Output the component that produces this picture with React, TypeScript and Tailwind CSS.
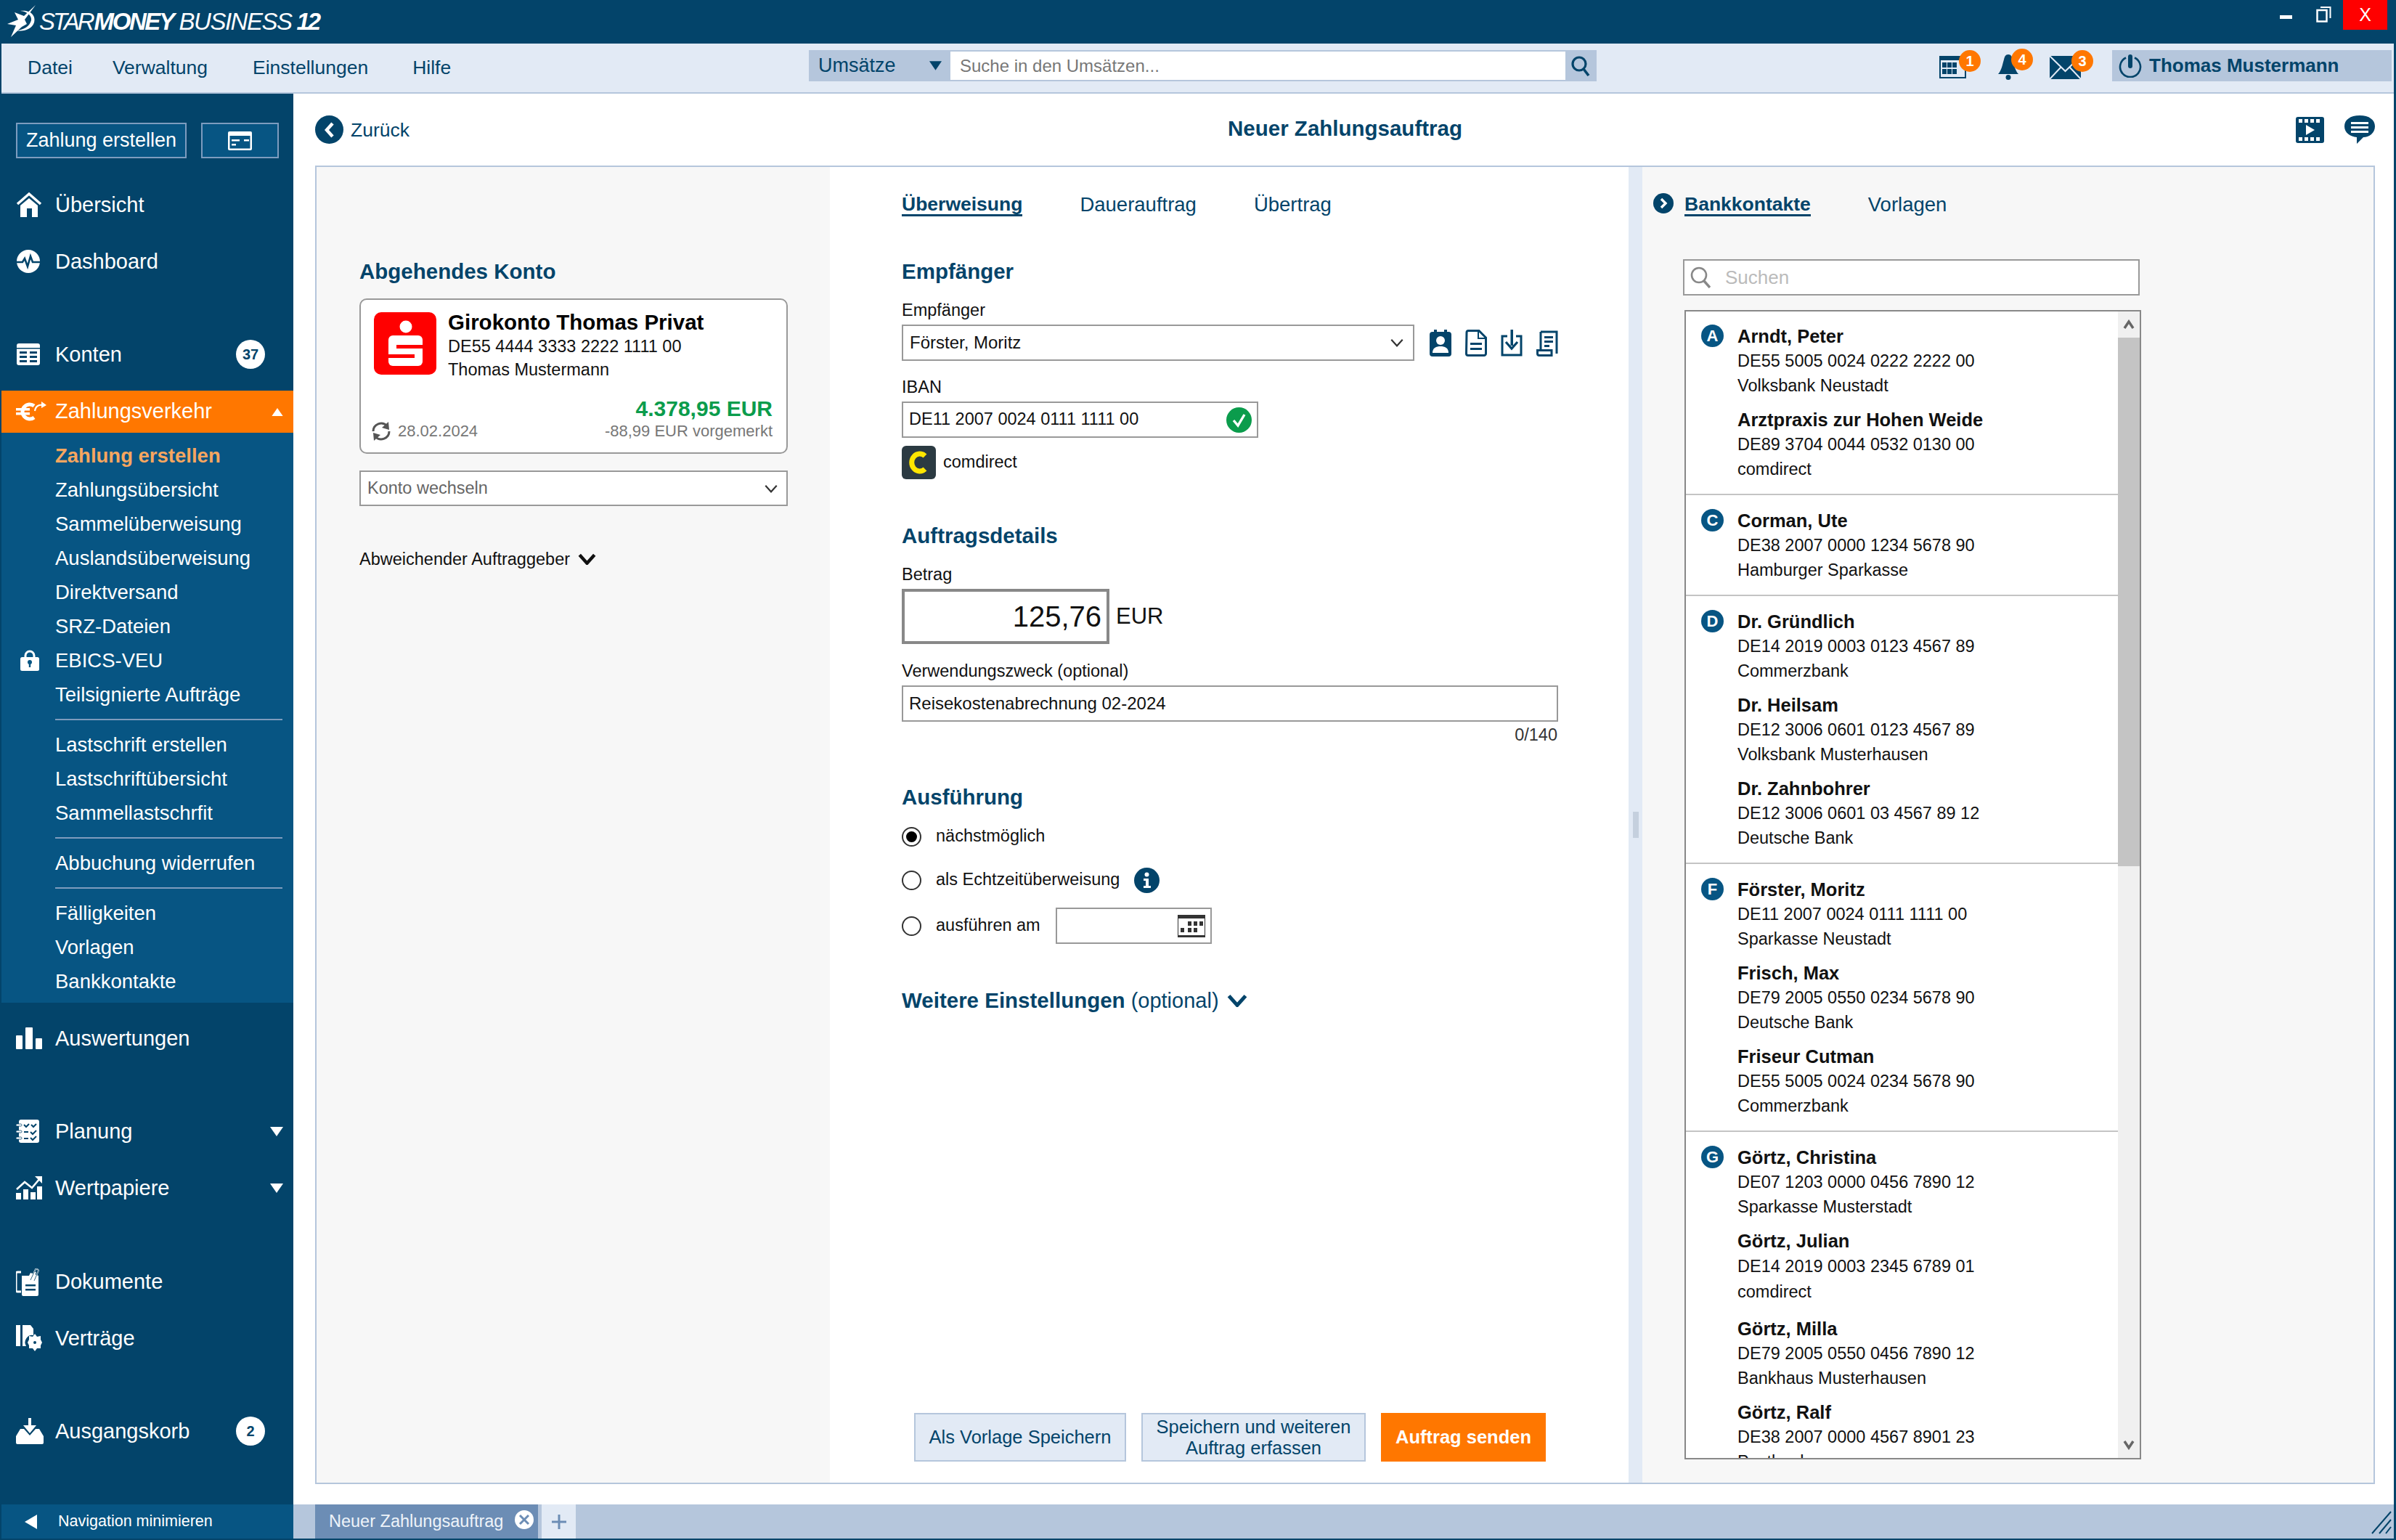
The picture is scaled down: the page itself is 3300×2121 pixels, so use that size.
import React from "react";

const NAVY = "#03446a";

const Svg = ({ w, h, vb, children, className }: { w: number; h: number; vb: string; children: React.ReactNode; className?: string }) => (
  <svg width={w} height={h} viewBox={vb} className={className} style={{ flexShrink: 0, display: "block" }}>
    {children}
  </svg>
);

const Chevron = ({ w = 22, h = 14, color = "#333", sw = 2.5 }: { w?: number; h?: number; color?: string; sw?: number }) => (
  <Svg w={w} h={h} vb="0 0 22 14">
    <polyline points="2,2 11,12 20,2" fill="none" stroke={color} strokeWidth={sw} />
  </Svg>
);

const Tri = ({ up = false, color = "#fff", w = 18, h = 13 }: { up?: boolean; color?: string; w?: number; h?: number }) => (
  <Svg w={w} h={h} vb="0 0 18 13">
    <polygon points={up ? "0,13 18,13 9,0" : "0,0 18,0 9,13"} fill={color} />
  </Svg>
);

const Logo = () => (
  <Svg w={44} h={48} vb="8 5 44 48">
    <path d="M49 7 L33 22 L20 17 L25 27 L10 33 L22 35 L15 51 L30 37 L37 33 L34 27Z" fill="#fff" />
    <path d="M28 15 C40 13 50 20 47 31 C44 40 33 44 23 42 C33 41 41 36 43 28 C44 22 38 16 28 15Z" fill="#fff" />
  </Svg>
);

const IHome = () => (
  <Svg w={36} h={36} vb="0 0 36 36">
    <polyline points="2,17 18,3 34,17" fill="none" stroke="#fff" strokeWidth="3.5" />
    <path d="M6 19 L18 9 L30 19 V35 H6Z" fill="#fff" />
    <rect x="15" y="23" width="7" height="12" fill={NAVY} />
  </Svg>
);
const IDash = () => (
  <Svg w={34} h={34} vb="0 0 34 34">
    <circle cx="17" cy="17" r="16" fill="#fff" />
    <polyline points="0,18 9,18 12,13 16,24 20,10 23,18 34,18" fill="none" stroke={NAVY} strokeWidth="2.6" />
  </Svg>
);
const IKonten = () => (
  <Svg w={34} h={30} vb="0 0 34 30">
    <rect x="1" y="0" width="32" height="30" rx="3" fill="#fff" />
    <rect x="1" y="6" width="32" height="1.5" fill={NAVY} />
    <rect x="5" y="11" width="10" height="3" fill={NAVY} /><rect x="19" y="11" width="10" height="3" fill={NAVY} />
    <rect x="5" y="17" width="10" height="3" fill={NAVY} /><rect x="19" y="17" width="10" height="3" fill={NAVY} />
    <rect x="5" y="23" width="10" height="3" fill={NAVY} /><rect x="19" y="23" width="10" height="3" fill={NAVY} />
  </Svg>
);
const IEuro = () => (
  <Svg w={42} h={30} vb="0 0 42 30">
    <path d="M25 7 A10 10 0 1 0 25 23" fill="none" stroke="#fff" strokeWidth="5" />
    <rect x="0" y="10" width="19" height="3.5" fill="#fff" />
    <rect x="0" y="16" width="19" height="3.5" fill="#fff" />
    <path d="M26 14 C27 7 32 5 37 6" fill="none" stroke="#fff" strokeWidth="2.2" />
    <polygon points="35,1 42,6 35,10" fill="#fff" />
  </Svg>
);
const ILock = () => (
  <Svg w={28} h={30} vb="0 0 28 30">
    <path d="M8 11 V8 A6 6 0 0 1 20 8 V11" fill="none" stroke="#fff" strokeWidth="3" />
    <rect x="1" y="10" width="26" height="19" rx="2.5" fill="#fff" />
    <circle cx="14" cy="17" r="3" fill="#075583" />
    <rect x="12.8" y="17" width="2.4" height="7" fill="#075583" />
  </Svg>
);
const IBars = () => (
  <Svg w={36} h={30} vb="0 0 36 30">
    <rect x="0" y="11" width="9" height="19" rx="1" fill="#fff" />
    <rect x="13" y="0" width="10" height="30" rx="1" fill="#fff" />
    <rect x="27" y="15" width="9" height="15" rx="1" fill="#fff" />
  </Svg>
);
const IPlan = () => (
  <Svg w={32} h={32} vb="0 0 32 32">
    <rect x="4" y="0" width="28" height="32" rx="3" fill="#fff" />
    {[6, 15, 24].map((y) => <rect key={y} x="0" y={y} width="8" height="3" rx="1.5" fill="#fff" stroke={NAVY} strokeWidth="0.8" />)}
    <polyline points="11,7 14,10 18,6" fill="none" stroke={NAVY} strokeWidth="2" />
    <polyline points="21,7 24,10 28,6" fill="none" stroke={NAVY} strokeWidth="2" />
    <polyline points="20,17 23,20 28,15" fill="none" stroke={NAVY} strokeWidth="2" />
    <polyline points="20,25 23,28 28,23" fill="none" stroke={NAVY} strokeWidth="2" />
    <rect x="11" y="16" width="6" height="2" fill={NAVY} />
    <rect x="11" y="25" width="6" height="2" fill={NAVY} />
  </Svg>
);
const IStock = () => (
  <Svg w={36} h={32} vb="0 0 36 32">
    <rect x="0" y="23" width="7" height="9" fill="#fff" />
    <rect x="10" y="18" width="7" height="14" fill="#fff" />
    <rect x="20" y="22" width="7" height="10" fill="#fff" />
    <rect x="29" y="14" width="7" height="18" fill="#fff" />
    <polyline points="1,18 12,8 22,16 33,3" fill="none" stroke="#fff" strokeWidth="2.6" />
    <polygon points="26,0 36,0 36,10" fill="#fff" />
  </Svg>
);
const IDocs = () => (
  <Svg w={32} h={40} vb="0 0 32 40">
    <path d="M7 7 H2 A2 2 0 0 0 0 9 V32 A2 2 0 0 0 2 34 H7" fill="none" stroke="#fff" strokeWidth="3" />
    <path d="M8 12 H18 L20 8 L31 12 V38 A2 2 0 0 1 29 40 H10 A2 2 0 0 1 8 38Z" fill="#fff" />
    <path d="M20 18 L27 3 A3 3 0 0 1 31 5 L25 19 A1.5 1.5 0 0 1 22 18 L27 7" fill="none" stroke="#fff" strokeWidth="1.8" />
    <path d="M20 18 L27 3 A3 3 0 0 1 31 5 L25 19" fill="none" stroke={NAVY} strokeWidth="0.8" />
    <rect x="13" y="24" width="14" height="2.5" fill={NAVY} />
    <rect x="13" y="30" width="14" height="2.5" fill={NAVY} />
  </Svg>
);
const IContract = () => (
  <Svg w={36} h={36} vb="0 0 36 36">
    <rect x="0" y="0" width="6" height="29" fill="#fff" />
    <path d="M9 0 H20 L24 5 V14 A10 10 0 0 0 14 29 H9Z" fill="#fff" />
    <circle cx="26" cy="24" r="8" fill="#fff" />
    <path d="M26 12 L29 16 L34 15 L34 20 L36 24 L34 28 L34 32 L29 32 L26 36 L23 32 L18 32 L18 28 L16 24 L18 20 L18 15 L23 16Z" fill="#fff" />
    <circle cx="26" cy="24" r="2" fill={NAVY} />
  </Svg>
);
const IOut = () => (
  <Svg w={38} h={36} vb="0 0 38 36">
    <rect x="17" y="0" width="4" height="12" fill="#fff" />
    <polygon points="10,10 28,10 19,21" fill="#fff" />
    <path d="M0 25 L6 15 H11 L19 24 L27 15 H32 L38 25 V34 A2 2 0 0 1 36 36 H2 A2 2 0 0 1 0 34Z" fill="#fff" />
  </Svg>
);

const NavItem = ({ icon, label, right }: { icon: React.ReactNode; label: string; right?: React.ReactNode }) => (
  <div className="h-[78px] flex items-center text-white text-[29px] leading-[34px]">
    <div className="w-[76px] shrink-0 pl-[22px] flex items-center">{icon}</div>
    <span className="flex-1">{label}</span>
    {right}
  </div>
);

const Count = ({ n }: { n: string }) => (
  <div className="w-[40px] h-[40px] rounded-full bg-white mr-[39px] flex items-center justify-center text-[20px] font-bold text-[#03446a]">{n}</div>
);

const Sub = ({ label, active, icon }: { label: string; active?: boolean; icon?: React.ReactNode }) => (
  <div className={active ? "h-[47px] flex items-center text-[27.5px] font-bold text-[#f7a65f]" : "h-[47px] flex items-center text-[27.5px] text-white"}>
    <div className="w-[74px] shrink-0 pl-[25px]">{icon}</div>
    <span className="whitespace-nowrap">{label}</span>
  </div>
);
const SubDiv = () => <div className="h-[2px] my-[10px] ml-[74px] mr-[15px] bg-[#7e9cbd]" />;

const Sidebar = () => (
  <div className="w-[404px] shrink-0 bg-[#03446a] flex flex-col">
    <div className="flex mt-[40px] ml-[22px] gap-[20px]">
      <div className="w-[235px] h-[49px] box-border border-2 border-[#7d9cbf] bg-[#075583] text-white text-[27px] flex items-center justify-center whitespace-nowrap">Zahlung erstellen</div>
      <div className="w-[107px] h-[49px] box-border border-2 border-[#7d9cbf] bg-[#075583] flex items-center justify-center">
        <Svg w={33} h={26} vb="0 0 33 26">
          <rect x="0" y="0" width="33" height="26" rx="2" fill="#fff" />
          <rect x="2.5" y="6" width="28" height="17.5" fill="#075583" />
          <rect x="5" y="11" width="11" height="2.5" fill="#fff" /><rect x="22" y="11" width="7" height="2.5" fill="#fff" />
          <rect x="5" y="17" width="6" height="2.5" fill="#fff" />
        </Svg>
      </div>
    </div>
    <div className="mt-[25px]">
      <NavItem icon={<IHome />} label="Übersicht" />
      <NavItem icon={<IDash />} label="Dashboard" />
    </div>
    <div className="mt-[50px]">
      <NavItem icon={<IKonten />} label="Konten" right={<Count n="37" />} />
    </div>
    <div className="mt-[11px] ml-[2px] h-[58px] bg-[#ff7700] flex items-center text-white text-[29px]">
      <div className="w-[74px] shrink-0 pl-[20px]"><IEuro /></div>
      <span className="flex-1">Zahlungsverkehr</span>
      <div className="mr-[12px]"><Tri up w={20} h={11} /></div>
    </div>
    <div className="ml-[2px] bg-[#075583] pt-[8px] pb-[6px]">
      <Sub label="Zahlung erstellen" active />
      <Sub label="Zahlungsübersicht" />
      <Sub label="Sammelüberweisung" />
      <Sub label="Auslandsüberweisung" />
      <Sub label="Direktversand" />
      <Sub label="SRZ-Dateien" />
      <Sub label="EBICS-VEU" icon={<ILock />} />
      <Sub label="Teilsignierte Aufträge" />
      <SubDiv />
      <Sub label="Lastschrift erstellen" />
      <Sub label="Lastschriftübersicht" />
      <Sub label="Sammellastschrfit" />
      <SubDiv />
      <Sub label="Abbuchung widerrufen" />
      <SubDiv />
      <Sub label="Fälligkeiten" />
      <Sub label="Vorlagen" />
      <Sub label="Bankkontakte" />
    </div>
    <div className="mt-[10px]">
      <NavItem icon={<IBars />} label="Auswertungen" />
    </div>
    <div className="mt-[50px]">
      <NavItem icon={<IPlan />} label="Planung" right={<div className="mr-[14px]"><Tri /></div>} />
      <NavItem icon={<IStock />} label="Wertpapiere" right={<div className="mr-[14px]"><Tri /></div>} />
    </div>
    <div className="mt-[51px]">
      <NavItem icon={<IDocs />} label="Dokumente" />
      <NavItem icon={<IContract />} label="Verträge" />
    </div>
    <div className="mt-[50px]">
      <NavItem icon={<IOut />} label="Ausgangskorb" right={<Count n="2" />} />
    </div>
  </div>
);

const Badge = ({ n }: { n: string }) => (
  <div className="absolute -top-[8px] -right-[20px] w-[30px] h-[30px] rounded-full bg-[#ff7700] text-white text-[20px] font-bold flex items-center justify-center">{n}</div>
);

const TitleBar = () => (
  <div className="h-[60px] shrink-0 flex items-start text-white">
    <div className="ml-[8px] mt-[5px]"><Logo /></div>
    <div className="ml-[2px] h-[60px] flex items-center italic text-[33px] whitespace-nowrap">
      <span className="tracking-[-3px]">STAR</span>
      <span className="ml-[2px] font-bold tracking-[-2.4px]">MONEY</span>
      <span className="ml-[8px] tracking-[-1.5px]">BUSINESS</span>
      <span className="ml-[7px] font-bold tracking-[-3px]">12</span>
    </div>
    <div className="ml-auto flex items-start">
      <div className="w-[17px] h-[5px] bg-white mt-[21px]" />
      <div className="ml-[33px] mt-[8px]">
        <Svg w={21} h={23} vb="0 0 21 23">
          <rect x="1.5" y="6" width="13" height="15.5" fill="none" stroke="#fff" strokeWidth="2.5" />
          <path d="M6 2 H19.5 V17" fill="none" stroke="#fff" strokeWidth="2" />
        </Svg>
      </div>
      <div className="ml-[16px] mr-[12px] w-[61px] h-[41px] bg-[#ff0000] flex items-center justify-center text-[25px]">X</div>
    </div>
  </div>
);

const MenuBar = () => (
  <div className="h-[69px] shrink-0 box-border ml-[2px] mr-[3px] bg-[#e2eaf5] border-b-2 border-[#b5c6dc] flex items-start text-[#03446a]">
    <div className="h-[67px] flex items-center text-[26.5px] ml-[36px] w-[1076px] shrink-0">
      <span>Datei</span>
      <span className="ml-[55px]">Verwaltung</span>
      <span className="ml-[62px]">Einstellungen</span>
      <span className="ml-[61px]">Hilfe</span>
    </div>
    <div className="w-[1085px] h-[43px] mt-[9px] bg-[#b5c6dc] flex items-center shrink-0">
      <span className="ml-[13px] text-[27px] w-[153px]">Umsätze</span>
      <Tri color={NAVY} w={17} h={13} />
      <div className="ml-[12px] w-[847px] h-[39px] bg-white flex items-center pl-[13px] text-[24px] text-[#777]">Suche in den Umsätzen...</div>
      <div className="ml-[8px]">
        <Svg w={26} h={28} vb="0 0 26 28">
          <circle cx="11" cy="11" r="9" fill="none" stroke={NAVY} strokeWidth="3.2" />
          <line x1="17" y1="18" x2="24" y2="27" stroke={NAVY} strokeWidth="3.6" />
        </Svg>
      </div>
    </div>
    <div className="ml-[472px] mt-[17px] relative">
      <Svg w={37} h={31} vb="0 0 37 31">
        <rect x="1" y="1" width="35" height="29" fill="none" stroke={NAVY} strokeWidth="2" />
        <rect x="0" y="0" width="37" height="6" fill={NAVY} />
        {[8, 15, 22].map((x) => <React.Fragment key={x}><rect x={x - 4} y="9" width="6" height="7" fill={NAVY} /><rect x={x - 4} y="18" width="6" height="7" fill={NAVY} /></React.Fragment>)}
      </Svg>
      <Badge n="1" />
    </div>
    <div className="ml-[44px] mt-[15px] relative">
      <Svg w={28} h={35} vb="0 0 28 35">
        <path d="M14 0 C18 0 19 3 20 7 C22 13 23 22 28 27 H0 C5 22 6 13 8 7 C9 3 10 0 14 0Z" fill={NAVY} />
        <circle cx="14" cy="31.5" r="3.5" fill={NAVY} />
      </Svg>
      <Badge n="4" />
    </div>
    <div className="ml-[43px] mt-[17px] relative">
      <Svg w={43} h={32} vb="0 0 43 32">
        <rect x="0" y="0" width="43" height="32" fill={NAVY} />
        <polyline points="0,0 21.5,21 43,0" fill="none" stroke="#e2eaf5" strokeWidth="2" />
        <path d="M0 32 L16 15 M43 32 L27 15" stroke="#e2eaf5" strokeWidth="2" />
      </Svg>
      <div className="absolute -top-[8px] -right-[17px] w-[30px] h-[30px] rounded-full bg-[#ff7700] text-white text-[20px] font-bold flex items-center justify-center">3</div>
    </div>
    <div className="ml-[43px] mt-[9px] w-[385px] h-[43px] bg-[#b5c6dc] flex items-center">
      <div className="ml-[9px]">
        <Svg w={32} h={32} vb="0 0 32 32">
          <path d="M10 4.5 A14 14 0 1 0 22 4.5" fill="none" stroke={NAVY} strokeWidth="2.6" />
          <rect x="13" y="0" width="6" height="19" rx="3" fill={NAVY} />
        </Svg>
      </div>
      <span className="ml-[10px] text-[26px] font-bold">Thomas Mustermann</span>
    </div>
  </div>
);

const H = ({ children, className = "" }: { children: React.ReactNode; className?: string }) => (
  <div className={"text-[29.5px] leading-[34px] font-bold text-[#03446a] " + className}>{children}</div>
);
const L = ({ children, className = "" }: { children: React.ReactNode; className?: string }) => (
  <div className={"text-[23.5px] leading-[30px] text-[#111] " + className}>{children}</div>
);

const LeftCol = () => (
  <div className="w-[707px] shrink-0 bg-[#f7f7f7] pl-[59px] pt-[127px]">
    <H>Abgehendes Konto</H>
    <div className="w-[590px] h-[214px] mt-[20px] box-border bg-white border-2 border-[#999] rounded-[10px] flex flex-col">
      <div className="flex mt-[17px] ml-[18px] h-[86px]">
        <Svg w={86} h={86} vb="0 0 86 86">
          <rect width="86" height="86" rx="10" fill="#ff0000" />
          <circle cx="44" cy="20" r="8.5" fill="#fff" />
          <rect x="20" y="32" width="47" height="42" rx="6" fill="#fff" />
          <rect x="31" y="45" width="36" height="5" fill="#ff0000" />
          <rect x="20" y="58" width="36" height="5" fill="#ff0000" />
        </Svg>
        <div className="ml-[16px] -mt-[2px]">
          <div className="text-[29.5px] leading-[32px] font-bold text-black whitespace-nowrap">Girokonto Thomas Privat</div>
          <L className="mt-[2px]">DE55 4444 3333 2222 1111 00</L>
          <L className="mt-[2px]">Thomas Mustermann</L>
        </div>
      </div>
      <div className="mt-[29px] mr-[19px] text-right text-[30px] leading-[36px] font-bold text-[#0b9c4c]">4.378,95 EUR</div>
      <div className="-mt-[2px] flex items-center mr-[19px] ml-[13px] text-[22px] leading-[30px] text-[#777]">
        <Svg w={30} h={30} vb="0 0 30 30">
          <path d="M4 15 A11 11 0 0 1 23 7.5" fill="none" stroke="#555" strokeWidth="3" />
          <polygon points="25,2 26,13 16,10" fill="#555" />
          <path d="M26 15 A11 11 0 0 1 7 22.5" fill="none" stroke="#555" strokeWidth="3" />
          <polygon points="5,28 4,17 14,20" fill="#555" />
        </Svg>
        <span className="ml-[8px]">28.02.2024</span>
        <span className="ml-auto">-88,99 EUR vorgemerkt</span>
      </div>
    </div>
    <div className="w-[590px] h-[49px] mt-[23px] box-border bg-white border-2 border-[#999] flex items-center pl-[9px] pr-[11px] text-[23.5px] text-[#666]">
      <span className="flex-1">Konto wechseln</span>
      <Chevron w={20} h={12} />
    </div>
    <div className="mt-[58px] flex items-center gap-[11px] text-[23.5px] leading-[30px] text-[#111]">
      <span>Abweichender Auftraggeber</span>
      <Chevron w={25} h={16} color="#111" sw={4} />
    </div>
  </div>
);

const Input = ({ className, children }: { className: string; children: React.ReactNode }) => (
  <div className={"box-border bg-white border-2 border-[#999] flex items-center text-[24px] text-[#111] " + className}>{children}</div>
);

const Radio = ({ on }: { on?: boolean }) => (
  <div className="w-[27px] h-[27px] rounded-full bg-white border-2 border-[#333] box-border flex items-center justify-center shrink-0">
    {on && <div className="w-[15px] h-[15px] rounded-full bg-black" />}
  </div>
);

const FormIcons = () => (
  <div className="flex ml-[21px] gap-[19px] items-center">
    <Svg w={30} h={37} vb="0 0 30 37">
      <rect x="0" y="3" width="30" height="34" rx="4" fill={NAVY} />
      <rect x="6" y="0" width="4" height="6" fill={NAVY} /><rect x="20" y="0" width="4" height="6" fill={NAVY} />
      <circle cx="15" cy="15" r="6" fill="#fff" />
      <path d="M4 32 C4 25 9 23 15 23 C21 23 26 25 26 32Z" fill="#fff" />
    </Svg>
    <Svg w={30} h={37} vb="0 0 30 37">
      <path d="M2 4 A2.5 2.5 0 0 1 4 1.5 H19 L28.5 11 V33 A2.5 2.5 0 0 1 26 35.5 H4 A2.5 2.5 0 0 1 1.5 33Z" fill="none" stroke={NAVY} strokeWidth="3" />
      <path d="M18 2 V12 H28" fill="none" stroke={NAVY} strokeWidth="2" />
      <rect x="7" y="18" width="16" height="3" fill={NAVY} /><rect x="7" y="25" width="16" height="3" fill={NAVY} />
    </Svg>
    <Svg w={30} h={37} vb="0 0 30 37">
      <path d="M9 9 H2 V35 H28 V9 H21" fill="none" stroke={NAVY} strokeWidth="3" />
      <rect x="13.5" y="0" width="3.5" height="22" fill={NAVY} />
      <polyline points="7,17 15,26 23,17" fill="none" stroke={NAVY} strokeWidth="3.2" />
    </Svg>
    <Svg w={30} h={37} vb="0 0 30 37">
      <path d="M6 3 H28 V33 M6 3 V28" fill="none" stroke={NAVY} strokeWidth="3" />
      <path d="M1.5 28.5 H21 V35.5 H4 A2.5 2.5 0 0 1 1.5 33Z" fill="none" stroke={NAVY} strokeWidth="3" />
      <rect x="11" y="9" width="12" height="3" fill={NAVY} /><rect x="11" y="15" width="12" height="3" fill={NAVY} /><rect x="11" y="21" width="7" height="3" fill={NAVY} />
    </Svg>
  </div>
);

const MiddleCol = () => (
  <div className="w-[1100px] shrink-0 bg-white pl-[99px] pt-[36px] flex flex-col pb-[29px]">
    <div className="flex text-[27.5px] leading-[31px] h-[32px] text-[#03446a]">
      <span className="font-bold text-[26.5px] border-b-[3px] border-[#03446a] h-[32px]">Überweisung</span>
      <span className="ml-[79px]">Dauerauftrag</span>
      <span className="ml-[79px]">Übertrag</span>
    </div>
    <H className="mt-[59px]">Empfänger</H>
    <L className="mt-[21px]">Empfänger</L>
    <div className="flex mt-[5px] h-[50px] items-center">
      <Input className="w-[706px] h-[50px] pl-[9px] pr-[12px]">
        <span className="flex-1">Förster, Moritz</span>
        <Chevron w={20} h={12} />
      </Input>
      <FormIcons />
    </div>
    <L className="mt-[21px]">IBAN</L>
    <Input className="w-[491px] h-[50px] mt-[5px] pl-[8px] pr-[7px]">
      <span className="flex-1 text-[23.5px]">DE11 2007 0024 0111 1111 00</span>
      <Svg w={35} h={35} vb="0 0 35 35">
        <circle cx="17.5" cy="17.5" r="17.5" fill="#0b9c4c" />
        <polyline points="10,18 16,25 25,10" fill="none" stroke="#fff" strokeWidth="3.4" />
      </Svg>
    </Input>
    <div className="flex items-center mt-[11px] h-[46px]">
      <Svg w={47} h={46} vb="0 0 47 46">
        <rect width="47" height="46" rx="6" fill="#2b3a42" />
        <path d="M32 14 A11 12 0 1 0 32 32" fill="none" stroke="#ffe600" strokeWidth="7" />
      </Svg>
      <span className="ml-[10px] text-[23.5px] text-[#111]">comdirect</span>
    </div>
    <H className="mt-[61px]">Auftragsdetails</H>
    <L className="mt-[21px]">Betrag</L>
    <div className="flex items-center mt-[5px]">
      <div className="w-[286px] h-[76px] box-border bg-white border-4 border-[#888] flex items-center justify-end pr-[7px] text-[40px] text-[#111]">125,76</div>
      <span className="ml-[9px] text-[31px] text-[#111]">EUR</span>
    </div>
    <L className="mt-[22px]">Verwendungszweck (optional)</L>
    <Input className="w-[904px] h-[50px] mt-[5px] pl-[8px]">Reisekostenabrechnung 02-2024</Input>
    <div className="w-[903px] mt-[3px] text-right text-[23.5px] leading-[30px] text-[#333]">0/140</div>
    <H className="mt-[54px]">Ausführung</H>
    <div className="flex items-center h-[40px] mt-[17px] text-[23.5px] text-[#111]">
      <Radio on /><span className="ml-[20px]">nächstmöglich</span>
    </div>
    <div className="flex items-center h-[40px] mt-[20px] text-[23.5px] text-[#111]">
      <Radio /><span className="ml-[20px]">als Echtzeitüberweisung</span>
      <div className="ml-[20px]">
        <Svg w={35} h={35} vb="0 0 35 35">
          <circle cx="17.5" cy="17.5" r="17.5" fill={NAVY} />
          <circle cx="17.5" cy="9.5" r="3" fill="#fff" />
          <path d="M13 15 H20 V25 H23 V28 H13 V25 H16 V18 H13Z" fill="#fff" />
        </Svg>
      </div>
    </div>
    <div className="flex items-center h-[50px] mt-[18px] text-[23.5px] text-[#111]">
      <Radio /><span className="ml-[20px] w-[165px]">ausführen am</span>
      <Input className="w-[215px] h-[50px] justify-end pr-[7px]">
        <Svg w={38} h={31} vb="0 0 38 31">
          <rect x="0.5" y="0.5" width="37" height="30" fill="#fff" stroke="#333" strokeWidth="1" />
          <rect x="0" y="0" width="38" height="5" fill="#333" />
          <rect x="0" y="28" width="38" height="2" fill="#333" />
          {[14, 22, 30].map((x) => <rect key={x} x={x} y="9" width="5" height="6" fill="#333" />)}
          {[4, 14, 22].map((x) => <rect key={x} x={x} y="18" width="5" height="6" fill="#333" />)}
        </Svg>
      </Input>
    </div>
    <div className="mt-[61px] flex items-center text-[29.5px] leading-[34px] text-[#03446a]">
      <span className="font-bold">Weitere Einstellungen</span>
      <span className="ml-[8px] text-[29px]">(optional)</span>
      <div className="ml-[11px]"><Chevron w={28} h={18} color={NAVY} sw={4} /></div>
    </div>
    <div className="mt-auto ml-[17px] flex gap-[21px] text-[25.5px] leading-[29px] text-[#03446a] text-center">
      <div className="w-[292px] h-[67px] box-border bg-[#e2eaf5] border-2 border-[#b5c6dc] flex items-center justify-center">Als Vorlage Speichern</div>
      <div className="w-[309px] h-[67px] box-border bg-[#e2eaf5] border-2 border-[#b5c6dc] flex items-center justify-center">Speichern und weiteren<br />Auftrag erfassen</div>
      <div className="w-[227px] h-[67px] bg-[#ff7700] text-white font-bold text-[25.5px] flex items-center justify-center">Auftrag senden</div>
    </div>
  </div>
);

type C = { n: string; i: string; b: string; wide?: boolean };
const groups: { l: string; first?: boolean; items: C[] }[] = [
  { l: "A", first: true, items: [
    { n: "Arndt, Peter", i: "DE55 5005 0024 0222 2222 00", b: "Volksbank Neustadt" },
    { n: "Arztpraxis zur Hohen Weide", i: "DE89 3704 0044 0532 0130 00", b: "comdirect" },
  ] },
  { l: "C", items: [{ n: "Corman, Ute", i: "DE38 2007 0000 1234 5678 90", b: "Hamburger Sparkasse" }] },
  { l: "D", items: [
    { n: "Dr. Gründlich", i: "DE14 2019 0003 0123 4567 89", b: "Commerzbank" },
    { n: "Dr. Heilsam", i: "DE12 3006 0601 0123 4567 89", b: "Volksbank Musterhausen" },
    { n: "Dr. Zahnbohrer", i: "DE12 3006 0601 03 4567 89 12", b: "Deutsche Bank" },
  ] },
  { l: "F", items: [
    { n: "Förster, Moritz", i: "DE11 2007 0024 0111 1111 00", b: "Sparkasse Neustadt" },
    { n: "Frisch, Max", i: "DE79 2005 0550 0234 5678 90", b: "Deutsche Bank" },
    { n: "Friseur Cutman", i: "DE55 5005 0024 0234 5678 90", b: "Commerzbank" },
  ] },
  { l: "G", items: [
    { n: "Görtz, Christina", i: "DE07 1203 0000 0456 7890 12", b: "Sparkasse Musterstadt" },
    { n: "Görtz, Julian", i: "DE14 2019 0003 2345 6789 01", b: "comdirect", wide: true },
    { n: "Görtz, Milla", i: "DE79 2005 0550 0456 7890 12", b: "Bankhaus Musterhausen" },
    { n: "Görtz, Ralf", i: "DE38 2007 0000 4567 8901 23", b: "Postbank" },
  ] },
];

const ContactList = () => (
  <div className="w-[629px] h-[1583px] mt-[21px] ml-[58px] box-border bg-white border-2 border-[#888] flex overflow-hidden">
    <div className="flex-1 overflow-hidden">
      {groups.map((g) => (
        <div key={g.l} className={(g.first ? "pt-[17px]" : "pt-[18px]") + " pb-[17px] pl-[21px] flex border-b-2 border-[#c4c4c4]"}>
          <div className="w-[31px] h-[31px] mt-[1px] rounded-full bg-[#075583] text-white text-[22px] font-bold flex items-center justify-center shrink-0">{g.l}</div>
          <div className="ml-[19px] flex flex-col gap-[13px]">
            {g.items.map((c) => (
              <div key={c.n}>
                <div className="text-[25.5px] leading-[34px] font-bold text-[#111] whitespace-nowrap">{c.n}</div>
                <div className={(c.wide ? "mt-[1px] " : "") + "text-[23.5px] leading-[34px] text-[#111] whitespace-nowrap"}>{c.i}</div>
                <div className={(c.wide ? "mt-[1px] mb-[4px] " : "") + "text-[23.5px] leading-[34px] text-[#111] whitespace-nowrap"}>{c.b}</div>
              </div>
            ))}
          </div>
        </div>
      ))}
    </div>
    <div className="w-[30px] shrink-0 bg-[#f0f0f0] flex flex-col items-center">
      <div className="h-[36px] flex items-center justify-center">
        <Svg w={16} h={14} vb="0 0 16 14"><polyline points="2,12 8,3 14,12" fill="none" stroke="#666" strokeWidth="3.5" /></Svg>
      </div>
      <div className="w-full h-[728px] bg-[#c4c4c4]" />
      <div className="mt-auto h-[36px] flex items-center justify-center">
        <Svg w={16} h={14} vb="0 0 16 14"><polyline points="2,2 8,11 14,2" fill="none" stroke="#666" strokeWidth="3.5" /></Svg>
      </div>
    </div>
  </div>
);

const RightCol = () => (
  <div className="flex-1 bg-[#f7f7f7] pt-[36px] flex flex-col">
    <div className="flex h-[32px] text-[27.5px] leading-[31px] text-[#03446a] ml-[15px]">
      <div className="w-[28px] h-[28px] rounded-full bg-[#03446a] flex items-center justify-center">
        <Svg w={12} h={16} vb="0 0 12 16"><polyline points="3,2 9,8 3,14" fill="none" stroke="#fff" strokeWidth="3.4" /></Svg>
      </div>
      <span className="ml-[15px] font-bold text-[26.5px] border-b-[3px] border-[#03446a] h-[32px]">Bankkontakte</span>
      <span className="ml-[79px]">Vorlagen</span>
    </div>
    <div className="w-[629px] h-[50px] mt-[59px] ml-[56px] box-border bg-white border-2 border-[#999] flex items-center pl-[8px]">
      <Svg w={28} h={30} vb="0 0 28 30">
        <circle cx="12" cy="12" r="10" fill="none" stroke="#888" strokeWidth="2.6" />
        <line x1="19" y1="20" x2="27" y2="29" stroke="#888" strokeWidth="3.4" />
      </Svg>
      <span className="ml-[20px] text-[26px] text-[#bbb]">Suchen</span>
    </div>
    <div className="-mt-[1px]"><ContactList /></div>
  </div>
);

const Main = () => (
  <div className="flex-1 bg-white flex flex-col mr-[3px] min-w-0">
    <div className="h-[99px] shrink-0 flex items-start relative">
      <div className="ml-[30px] mt-[30px] w-[39px] h-[39px] rounded-full bg-[#03446a] flex items-center justify-center">
        <Svg w={16} h={22} vb="0 0 16 22"><polyline points="12,2 4,11 12,20" fill="none" stroke="#fff" strokeWidth="4.5" /></Svg>
      </div>
      <span className="ml-[10px] mt-[32px] text-[26.5px] leading-[36px] text-[#03446a]">Zurück</span>
      <span className="ml-[1123px] mt-[30px] w-[331px] text-[29.5px] leading-[36px] font-bold text-[#03446a] text-center whitespace-nowrap">Neuer Zahlungsauftrag</span>
      <div className="ml-auto mt-[32px] mr-[26px] flex items-start">
        <Svg w={39} h={36} vb="0 0 39 36">
          <rect width="39" height="36" rx="3" fill={NAVY} />
          {[4, 12, 20, 28].map((x) => <React.Fragment key={x}><rect x={x} y="3" width="5" height="5" fill="#fff" /><rect x={x} y="28" width="5" height="5" fill="#fff" /></React.Fragment>)}
          <polygon points="14,11 26,18 14,25" fill="#fff" />
        </Svg>
        <div className="ml-[28px] -mt-[2px]">
          <Svg w={42} h={39} vb="0 0 42 39">
            <path d="M21 0 C34 0 42 6 42 15 C42 24 34 30 26 30 L17 39 L17 30 C8 29 0 24 0 15 C0 6 8 0 21 0Z" fill={NAVY} />
            <rect x="9" y="9" width="24" height="3" fill="#fff" /><rect x="9" y="15" width="24" height="3" fill="#fff" /><rect x="9" y="21" width="24" height="3" fill="#fff" />
          </Svg>
        </div>
      </div>
    </div>
    <div className="h-[1816px] ml-[30px] mr-[26px] box-border border-2 border-[#b5c6dc] flex shrink-0">
      <LeftCol />
      <MiddleCol />
      <div className="w-[19px] shrink-0 bg-[#e2eaf5] flex items-center justify-center">
        <div className="w-[8px] h-[36px] bg-[#c5d0de]" />
      </div>
      <RightCol />
    </div>
  </div>
);

const BottomBar = () => (
  <div className="h-[47px] shrink-0 flex">
    <div className="w-[402px] ml-[2px] bg-[#075583] flex items-center text-white text-[21.5px] shrink-0">
      <div className="ml-[32px]"><Svg w={17} h={20} vb="0 0 17 20"><polygon points="17,0 17,20 0,10" fill="#fff" /></Svg></div>
      <span className="ml-[29px]">Navigation minimieren</span>
    </div>
    <div className="flex-1 mr-[3px] bg-[#b5c6dc] flex items-stretch">
      <div className="ml-[30px] w-[307px] bg-[#6c8db5] flex items-center text-[#eef3f9] text-[23.5px] pl-[19px] shrink-0">
        <span className="flex-1 whitespace-nowrap">Neuer Zahlungsauftrag</span>
        <div className="mr-[6px] -mt-[6px]">
          <Svg w={26} h={26} vb="0 0 26 26">
            <circle cx="13" cy="13" r="13" fill="#fff" />
            <path d="M7 7 L19 19 M19 7 L7 19" stroke="#6c8db5" strokeWidth="3" />
          </Svg>
        </div>
      </div>
      <div className="ml-[5px] w-[47px] bg-[#e2eaf5] flex items-center justify-center shrink-0">
        <Svg w={20} h={20} vb="0 0 20 20"><path d="M10 0 V20 M0 10 H20" stroke="#6c8db5" strokeWidth="3" /></Svg>
      </div>
      <div className="ml-auto self-end mb-[6px] mr-[3px]">
        <Svg w={30} h={32} vb="0 0 30 32">
          <path d="M29 1 L3 31 M29 12 L13 31 M29 22 L22 31" stroke={NAVY} strokeWidth="2" />
        </Svg>
      </div>
    </div>
  </div>
);

export default function App() {
  return (
    <div className="w-[3300px] h-[2121px] bg-[#03446a] flex flex-col overflow-hidden font-['Liberation_Sans',Arial,sans-serif] pb-[2px] box-border">
      <TitleBar />
      <MenuBar />
      <div className="flex-1 flex min-h-0">
        <Sidebar />
        <Main />
      </div>
      <BottomBar />
    </div>
  );
}
